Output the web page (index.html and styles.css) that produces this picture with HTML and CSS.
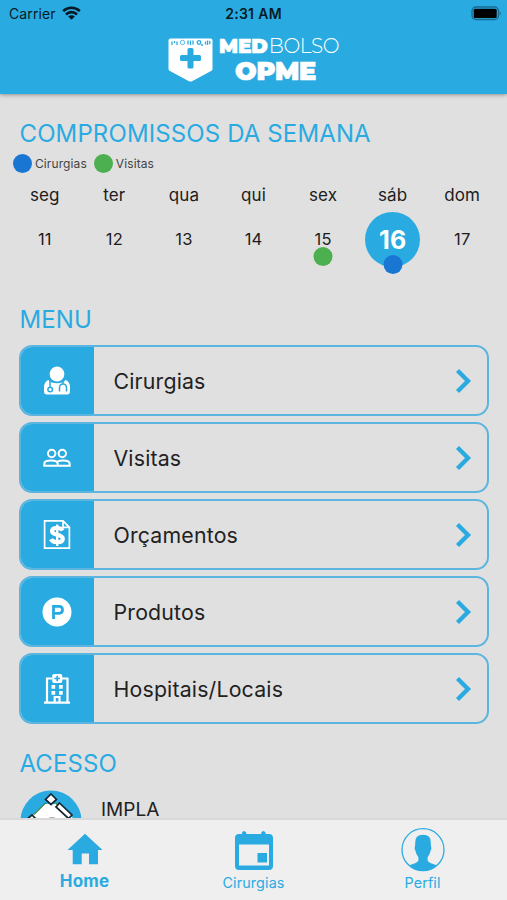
FILE: index.html
```html
<!DOCTYPE html>
<html lang="pt-BR">
<head>
<meta charset="utf-8">
<title>MedBolso OPME</title>
<link rel="stylesheet" href="styles.css">
</head>
<body>
<div class="app">
  <header class="header">
    <div class="status">
      <div class="carrier"><span class="carrier-name">Carrier</span>
        <svg width="19" height="14" viewBox="0 0 19 14" fill="none" stroke="#071a24" stroke-width="2.700"><path d="M1.2 5.1a12 12 0 0 1 16.600 0M4 8.400a8 8 0 0 1 11 0"/><path d="M9.500 13.700 6.200 10.600a4.700 4.700 0 0 1 6.600 0z" fill="#071a24" stroke="none"/></svg>
      </div>
      <span class="clock">2:31 AM</span>
      <svg class="battery" width="31" height="15" viewBox="0 0 31 15"><rect x="1" y="1" width="26.500" height="12.500" rx="4" fill="none" stroke="#176b91" stroke-width="1.300"/><rect x="2.700" y="2.700" width="23" height="9.200" rx="1.500" fill="#000"/><path d="M28.800 5.200a3 3 0 0 1 0 4.200z" fill="#176b91"/></svg>
    </div>
    <div class="brand">
      <svg width="45" height="45" viewBox="0 0 45 45"><path fill="#fff" d="M2.500.5h40q2 0 2 2v28.500q0 1.200-1 1.800L24 43.200q-1.500.8-3 0L1.500 32.800q-1-.6-1-1.800V2.500q0-2 2-2z"/><path fill="#29abe2" d="M19.500 11.500q0-1.500 1.500-1.500h3q1.500 0 1.500 1.500v5.500h6q1.500 0 1.500 1.500v3q0 1.500-1.500 1.500h-6v6q0 1.500-1.500 1.500h-3q-1.500 0-1.500-1.500v-6h-6q-1.500 0-1.500-1.500v-3q0-1.500 1.500-1.500h6z"/><g fill="none" stroke="#29abe2" stroke-width="1.300"><path d="M4 7V3.500M6.500 3v2M9 7V3.500M20 2.500v4M22.500 2.500v4.500M25 2.500v4M37.500 3.500v3M39.500 2.500V7"/><circle cx="14.500" cy="4.500" r="2.200" stroke-width=".8"/><circle cx="31" cy="4.500" r="1.800"/><path d="M41 3q2 1.500 0 3M33 7h2"/></g></svg>
      <div class="brand-text">
        <div class="brand-top"><b>MED</b><span>BOLSO</span></div>
        <div class="brand-bottom">OPME</div>
      </div>
    </div>
  </header>
  <main class="content">
    <h2 class="title">COMPROMISSOS DA SEMANA</h2>
    <div class="legend"><i class="dot blue"></i><span>Cirurgias</span><i class="dot green"></i><span>Visitas</span></div>
    <div class="week days"><span>seg</span><span>ter</span><span>qua</span><span>qui</span><span>sex</span><span>sáb</span><span>dom</span></div>
    <div class="week dates"><span>11</span><span>12</span><span>13</span><span>14</span><span class="marked">15<i class="dot green mark"></i></span><span><b class="today">16<i class="dot blue mark"></i></b></span><span>17</span></div>
    <h2 class="title menu-title">MENU</h2>
    <nav class="menu">
      <a class="card"><span class="tile"><svg width="30" height="30" viewBox="0 0 30 30"><circle cx="15" cy="8" r="7.400" fill="#fff"/><path fill="#fff" d="M6.500 14q2 3.300 8.500 3.300t8.500-3.300Q28 15.500 28 21.500v4q0 3-3 3H5q-3 0-3-3v-4q0-6 4.500-7.500z"/><g fill="none" stroke="#29abe2" stroke-width="1.500"><path d="M8 13.500v8M17.500 25.500V22q0-4 3.500-4t3.500 4v3.500M21 18v-3.500"/><circle cx="8.200" cy="23.500" r="2.300"/></g></svg></span><span class="label">Cirurgias</span><svg class="chevron" width="18" height="26" viewBox="0 0 18 26"><path d="m3.500 2.500 10.500 10.500L3.500 23.500"/></svg></a>
      <a class="card"><span class="tile"><svg width="30" height="30" viewBox="0 0 30 30" fill="none" stroke="#fff" stroke-width="2"><circle cx="9.700" cy="10.500" r="3.700"/><circle cx="20.300" cy="10.500" r="3.700"/><path d="M2.300 22.700v-2q0-3.200 6.700-3.200t6.700 3.200v2zM15.700 22.700h12v-2q0-3.200-6.700-3.200-3.500 0-5.300.9"/></svg></span><span class="label">Visitas</span><svg class="chevron" width="18" height="26" viewBox="0 0 18 26"><path d="m3.500 2.500 10.500 10.500L3.500 23.500"/></svg></a>
      <a class="card"><span class="tile"><svg width="30" height="30" viewBox="0 0 30 30" fill="none" stroke="#fff"><path stroke-width="1.700" d="M2.600.9H21L27.400 7.300v20.800H2.600zM21 .9v6.400h6.400"/><path stroke-width="4.200" d="M20.500 10.500Q19.500 8 15 8q-5 0-5 3.200c0 4.300 10.800 2.800 10.800 7.500 0 2.500-2 3.500-5.500 3.500q-5 0-6.300-3"/><path stroke-width="2.400" d="M15.200 4.500v21.500"/></svg></span><span class="label">Orçamentos</span><svg class="chevron" width="18" height="26" viewBox="0 0 18 26"><path d="m3.500 2.500 10.500 10.500L3.500 23.500"/></svg></a>
      <a class="card"><span class="tile"><svg width="30" height="30" viewBox="0 0 30 30"><circle cx="15" cy="15" r="14.500" fill="#fff"/><path fill="none" stroke="#29abe2" stroke-width="2.800" d="M11.500 22V9.300h5.700q3.300 0 3.300 3.500t-3.300 3.500h-5.700"/></svg></span><span class="label">Produtos</span><svg class="chevron" width="18" height="26" viewBox="0 0 18 26"><path d="m3.500 2.500 10.500 10.500L3.500 23.500"/></svg></a>
      <a class="card"><span class="tile"><svg width="30" height="30" viewBox="0 0 30 30"><path fill="none" stroke="#fff" stroke-width="2.200" d="M2 28.600h26M5 28.500V4.500h5M20 4.500h5.500v24M12.700 28v-5h4.800v5"/><path fill="#fff" d="M12 0h6.500q1.800 0 1.800 2v5q0 2-1.800 2H12q-1.800 0-1.800-2V2Q10.200 0 12 0zM9.500 11h3.700v3.700H9.500zM17 11h3.700v3.700H17zM9.500 17h3.700v3.700H9.500zM17 17h3.700v3.700H17z"/><path stroke="#29abe2" stroke-width="1.700" d="M15.200 1.700v5.600M12.400 4.500H18"/></svg></span><span class="label">Hospitais/Locais</span><svg class="chevron" width="18" height="26" viewBox="0 0 18 26"><path d="m3.500 2.500 10.500 10.500L3.500 23.500"/></svg></a>
    </nav>
    <h2 class="title access-title">ACESSO</h2>
    <div class="access">
      <svg width="62" height="62" viewBox="0 0 62 62"><circle cx="31" cy="31" r="30.500" fill="#29abe2"/><path d="M25 14 12 26 4 40h50V29L37 14z" fill="#fff"/><path d="M26 12.500 14 24.500M36 13l13 16" stroke="#3c8a4e" stroke-width="1.200"/><g fill="#fff" stroke="#122630" stroke-width="1.700"><path d="m31 4 5.500 5.500-5.500 5-5.500-5z"/><path d="m39.500 13 12.500 12-3.500 3.500L36 17z"/><path d="m6 30 6-5 5 5"/></g><circle cx="32" cy="34" r="7" fill="#aaa"/></svg>
      <span>IMPLA</span>
    </div>
  </main>
  <footer class="tabs">
    <a class="tab home"><svg width="44" height="44" viewBox="0 0 44 44"><path fill="#29abe2" d="M22 5.700 39.500 21.900H35V36.200H26V25.500H18.700V36.200H9.700V21.900H4.500z"/></svg><b>Home</b></a>
    <a class="tab"><svg width="44" height="44" viewBox="0 0 44 44"><path fill="#29abe2" fill-rule="evenodd" d="M10 4.500q2-3 4.300 0V6h15V4.500q2-3 4.300 0V6H37q4 0 4 4v28q0 4-4 4H7q-4 0-4-4V10q0-4 4-4h3zM7 16.500v21h30v-21z"/><path fill="#29abe2" d="M25.500 25h9.500v9.500h-9.500z"/></svg><span>Cirurgias</span></a>
    <a class="tab"><svg width="44" height="44" viewBox="0 0 44 44"><circle cx="22" cy="21.700" r="21" fill="none" stroke="#29abe2" stroke-width="1.300"/><path fill="#29abe2" transform="translate(0 -.8)" d="M22 7.500q8.200 0 7.800 8 0 2.500.2 3.500 1.200 1.500-.4 4.500-.8 4-3 6.500v3.500q1 2 9 4.500Q29.500 43.500 22 43.500T8.400 38q8-2.500 9-4.500V30q-2.200-2.500-3-6.500-1.600-3-.4-4.500.2-1 .2-3.500-.4-8 7.800-8z"/></svg><span>Perfil</span></a>
  </footer>
</div>
</body>
</html>
```
FILE: styles.css
```css
* { box-sizing: border-box; }
body { margin: 0; font-family: Inter, "Liberation Sans", sans-serif; background: #e0e0e0; color: #222; }
svg { display: block; flex: none; }
.app { width: 507px; height: 900px; display: flex; flex-direction: column; overflow: hidden; }
.header { flex: none; height: 94px; background: #29abe2; box-shadow: 0 1px 4px rgba(0,0,0,.35); z-index: 1; }
.status { height: 28px; display: grid; grid-template-columns: 1fr auto 1fr; align-items: center; padding: 0 5px; color: #071a24; font-size: 14px; line-height: 28px; }
.carrier { display: flex; align-items: center; gap: 6px; padding-left: 4px; }
.carrier svg { margin-top: -2px; }
.carrier-name { letter-spacing: .1px; }
.clock { font-weight: 600; font-size: 14px; letter-spacing: .3px; }
.battery { justify-self: end; margin-top: -2px; }
.brand { display: flex; padding: 9.500px 0 0 168px; gap: 6px; color: #fff; }
.brand-text { font-family: "Montserrat", Inter, sans-serif; }
.brand-top { display: flex; font-size: 20px; line-height: 17px; }
.brand-top b { font-weight: 900; letter-spacing: -.1px; -webkit-text-stroke: .5px #fff; }
.brand-top span { font-weight: 300; letter-spacing: -.35px; margin-left: 1px; }
.brand-bottom { font-weight: 900; font-size: 25.5px; line-height: 31px; margin-left: 16px; letter-spacing: -.2px; -webkit-text-stroke: .6px #fff; }
.content { flex: 1; min-height: 0; overflow: hidden; padding-top: 24px; }
.title { margin: 0 19.500px; font-size: 24px; line-height: 32px; height: 30px; font-weight: 400; letter-spacing: .12px; color: #29abe2; white-space: nowrap; }
.legend { display: flex; align-items: center; height: 30px; padding-left: 13px; font-size: 12px; letter-spacing: .1px; color: #444; }
.dot { display: block; width: 19px; height: 19px; border-radius: 50%; flex: none; }
.blue { background: #1976d2; }
.green { background: #4caf50; }
.legend span { margin: 0 7px 0 3px; }
.week { display: grid; grid-template-columns: repeat(7, 1fr); padding: 0 10px; text-align: center; font-size: 17px; letter-spacing: .1px; color: #1c1c1c; }
.days { line-height: 34px; height: 34px; }
.dates { height: 54px; line-height: 55px; font-size: 16.5px; }
.marked, .today { position: relative; display: block; }
.today { width: 55px; height: 55px; margin: 0 auto; border-radius: 50%; background: #29abe2; color: #fff; font-size: 25px; line-height: 56px; }
.mark { position: absolute; left: 50%; top: 35px; transform: translateX(-50%); }
.today .mark { top: 43px; }
.menu-title { margin-top: 38px; }
.menu { display: grid; gap: 6px; padding: 11px 18px 0 19px; }
.card { display: flex; align-items: center; height: 71px; border: 2px solid #5cb5df; border-radius: 13px; overflow: hidden; }
.tile { width: 73px; height: 100%; padding-right: 2px; background: #29abe2; display: grid; place-items: center; flex: none; }
.label { flex: 1; margin-left: 19.500px; font-size: 21.3px; letter-spacing: .18px; }
.chevron { margin-right: 15px; fill: none; stroke: #29abe2; stroke-width: 4.3; }
.access-title { margin-top: 24px; }
.access { display: flex; height: 62px; margin: 12px 20px; gap: 19px; font-size: 19px; }
.access span { line-height: 24px; margin-top: 8px; height: 24px; }
.tabs { flex: none; height: 82px; border-top: 2px solid #d9d9d9; background: #efefef; display: grid; grid-template-columns: repeat(3, 1fr); }
.tab { display: flex; flex-direction: column; align-items: center; padding-top: 8px; color: #29abe2; font-size: 14.3px; line-height: 21px; letter-spacing: .15px; }
.home b { font-size: 17px; line-height: 18px; }
```
